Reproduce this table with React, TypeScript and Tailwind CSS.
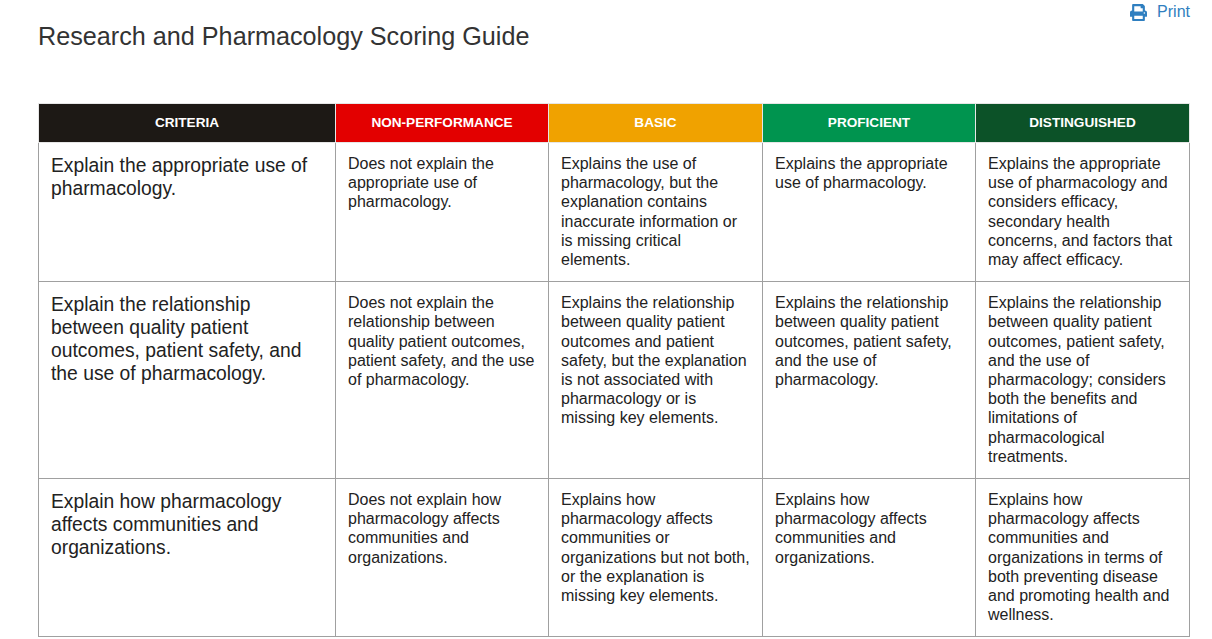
import { FaPrint } from 'react-icons/fa';

const headers = [
  { label: 'CRITERIA', bg: 'bg-[#1d1915]' },
  { label: 'NON-PERFORMANCE', bg: 'bg-[#e30000]' },
  { label: 'BASIC', bg: 'bg-[#f0a200]' },
  { label: 'PROFICIENT', bg: 'bg-[#00944f]' },
  { label: 'DISTINGUISHED', bg: 'bg-[#0c5228]' },
];

const rows = [
  {
    criteria: 'Explain the appropriate use of pharmacology.',
    levels: [
      'Does not explain the appropriate use of pharmacology.',
      'Explains the use of pharmacology, but the explanation contains inaccurate information or is missing critical elements.',
      'Explains the appropriate use of pharmacology.',
      'Explains the appropriate use of pharmacology and considers efficacy, secondary health concerns, and factors that may affect efficacy.',
    ],
  },
  {
    criteria: 'Explain the relationship between quality patient outcomes, patient safety, and the use of pharmacology.',
    levels: [
      'Does not explain the relationship between quality patient outcomes, patient safety, and the use of pharmacology.',
      'Explains the relationship between quality patient outcomes and patient safety, but the explanation is not associated with pharmacology or is missing key elements.',
      'Explains the relationship between quality patient outcomes, patient safety, and the use of pharmacology.',
      'Explains the relationship between quality patient outcomes, patient safety, and the use of pharmacology; considers both the benefits and limitations of pharmacological treatments.',
    ],
  },
  {
    criteria: 'Explain how pharmacology affects communities and organizations.',
    levels: [
      'Does not explain how pharmacology affects communities and organizations.',
      'Explains how pharmacology affects communities or organizations but not both, or the explanation is missing key elements.',
      'Explains how pharmacology affects communities and organizations.',
      'Explains how pharmacology affects communities and organizations in terms of both preventing disease and promoting health and wellness.',
    ],
  },
];

const widths = ['w-[297px]', 'w-[213px]', 'w-[214px]', 'w-[213px]', 'w-[214px]'];

export default function App() {
  return (
    <div className="min-h-screen bg-white font-['Liberation_Sans',Arial,sans-serif] text-[#222]">
      <div className="w-[1151px] ml-[38px]">
        <div className="flex justify-between items-start">
          <h1 className="mt-[21px] text-[25.2px] leading-[30px] text-[#333] font-normal">
            Research and Pharmacology Scoring Guide
          </h1>
          <a className="flex items-center gap-[9px] mt-[3px] mr-[-1px] text-[#2f7fc0] text-[16px] leading-[18px] cursor-pointer">
            <FaPrint className="w-[19px] h-[17px]" />
            Print
          </a>
        </div>

        <table className="mt-[52px] table-fixed border-collapse w-[1151px]">
          <thead>
            <tr>
              {headers.map((h, i) => (
                <th
                  key={h.label}
                  className={`${widths[i]} ${h.bg} h-[39px] border border-[#e6e6e6] text-white text-[13.6px] font-bold text-center align-middle p-0`}
                >
                  {h.label}
                </th>
              ))}
            </tr>
          </thead>
          <tbody>
            {rows.map((r) => (
              <tr key={r.criteria}>
                <td className="border border-[#a0a0a0] align-top pl-[12px] pr-[12px] pt-[11px] pb-[12px] text-[19.3px] leading-[23px] text-[#222]">
                  {r.criteria}
                </td>
                {r.levels.map((t, i) => (
                  <td
                    key={i}
                    className="border border-[#a0a0a0] align-top pl-[12px] pr-[10px] pt-[11px] pb-[12px] text-[16px] leading-[19.2px] text-[#222]"
                  >
                    {t}
                  </td>
                ))}
              </tr>
            ))}
          </tbody>
        </table>
      </div>
    </div>
  );
}
